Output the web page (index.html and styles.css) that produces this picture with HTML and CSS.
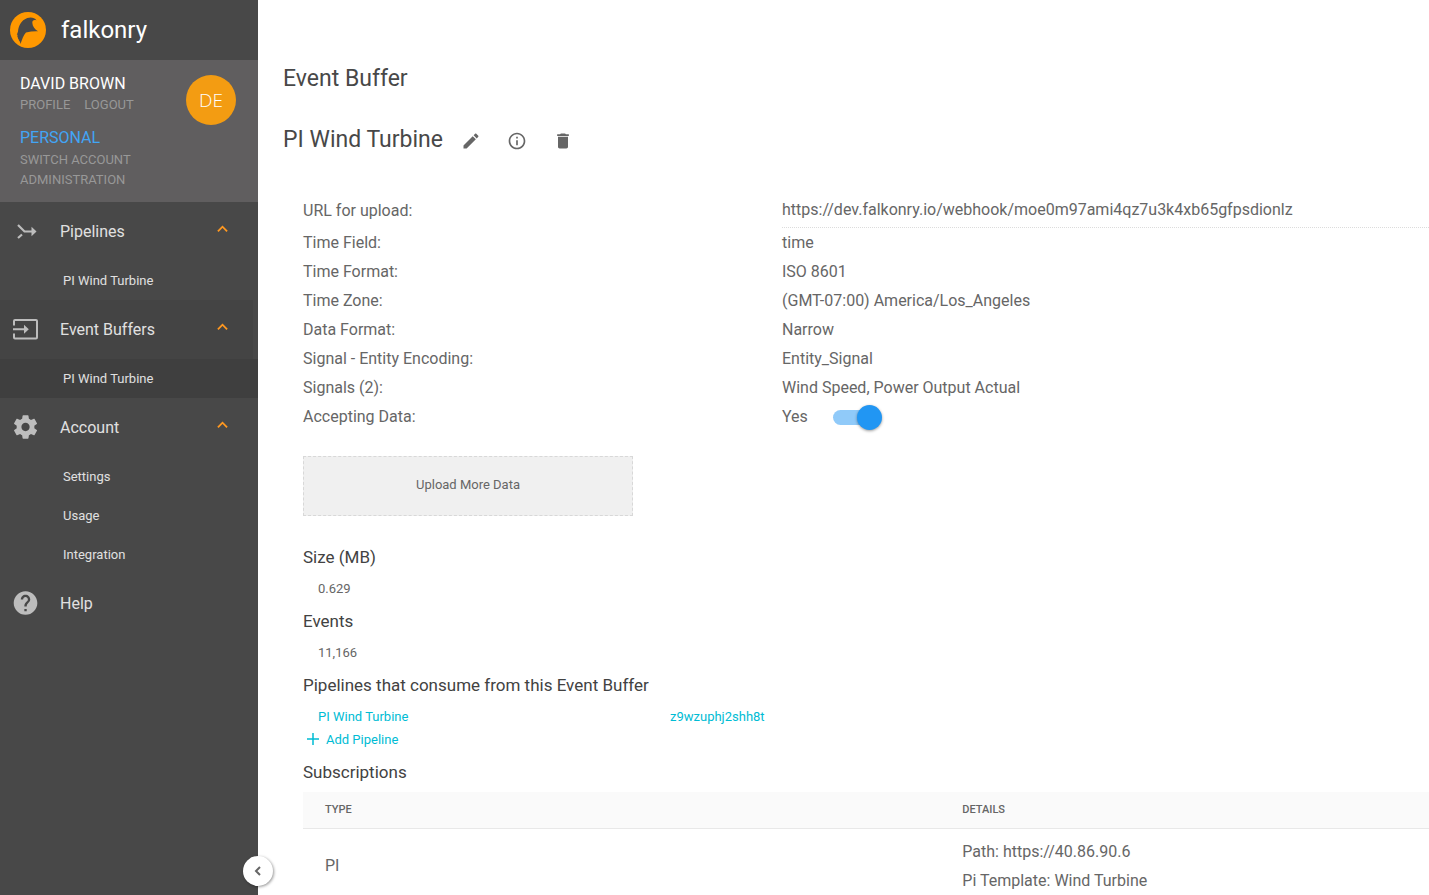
FILE: index.html
```html
<!DOCTYPE html>
<html lang="en">
<head>
<meta charset="utf-8">
<title>Event Buffer - falkonry</title>
<link rel="stylesheet" href="styles.css">
</head>
<body>
<div class="app">
  <aside class="sidebar">
    <div class="brand">
      <svg class="brand-logo" viewBox="0 0 36 36" aria-hidden="true"><circle cx="18" cy="18" r="18" fill="#ff9800"/><path fill="#484848" d="M8 19.500C8.500 14 11 9.500 14.500 7.500C18 5 24 4.500 26.500 8.500C24 7.500 22.300 8.500 22.300 10.800C22.500 14.500 25 17.500 28 19.200C24 19 20 19.500 16 20.500C13.500 23 12 27.500 10.500 32L9.700 28.500L9.200 30L8.700 26.500L8 28L8 24.500L7.200 26L7.600 22.500L6.800 23Z"/></svg>
      <span class="brand-name">falkonry</span>
    </div>
    <section class="user">
      <div class="user-info">
        <div class="user-name">DAVID BROWN</div>
        <div class="user-links"><a href="#profile">PROFILE</a><a href="#logout">LOGOUT</a></div>
        <div class="account-name">PERSONAL</div>
        <a class="user-link" href="#switch">SWITCH ACCOUNT</a>
        <a class="user-link" href="#admin">ADMINISTRATION</a>
      </div>
      <div class="avatar">DE</div>
    </section>
    <nav class="menu">
      <a class="menu-item" href="#pipelines">
        <svg class="menu-icon" viewBox="0 0 26 26" aria-hidden="true"><path d="M5 7L11.500 13.500H19M5 20L9 16.500" fill="none" stroke="#bdbdbd" stroke-width="2.200"/><path d="M18.500 8.800L23.500 13.500L18.500 18.300Z" fill="#bdbdbd"/></svg>
        <span class="menu-label">Pipelines</span>
        <svg class="chevron" viewBox="0 0 12 8" aria-hidden="true"><path d="M1 6.500L6 1.500L11 6.500"/></svg>
      </a>
      <a class="sub-item" href="#pipeline">PI Wind Turbine</a>
      <a class="menu-item menu-item-open" href="#buffers">
        <svg class="menu-icon" viewBox="0 0 26 26" aria-hidden="true"><path d="M1 9.500V5Q1 4 2 4H23Q24 4 24 5V21.500Q24 22.500 23 22.500H2Q1 22.500 1 21.500V17.500M0 13.300H12" fill="none" stroke="#bdbdbd" stroke-width="2"/><path d="M11 8.800L15.800 13.300L11 17.800Z" fill="#bdbdbd"/></svg>
        <span class="menu-label">Event Buffers</span>
        <svg class="chevron" viewBox="0 0 12 8" aria-hidden="true"><path d="M1 6.500L6 1.500L11 6.500"/></svg>
      </a>
      <a class="sub-item sub-item-active" href="#buffer">PI Wind Turbine</a>
      <a class="menu-item" href="#account">
        <svg class="menu-icon" viewBox="1.400 1 22 22" aria-hidden="true"><path fill="#bdbdbd" d="M19.430 12.980c.04-.32.07-.64.07-.98s-.03-.66-.07-.98l2.110-1.650c.19-.15.24-.42.12-.64l-2-3.460c-.12-.22-.39-.3-.61-.22l-2.490 1c-.52-.4-1.080-.73-1.690-.98l-.38-2.650C14.460 2.180 14.250 2 14 2h-4c-.25 0-.46.18-.49.42l-.38 2.650c-.61.25-1.170.59-1.690.98l-2.490-1c-.23-.09-.49 0-.61.22l-2 3.460c-.13.22-.07.49.12.64l2.110 1.650c-.04.32-.07.65-.07.98s.03.66.07.98l-2.110 1.650c-.19.15-.24.42-.12.64l2 3.460c.12.22.39.3.61.22l2.490-1c.52.4 1.080.73 1.690.98l.38 2.650c.03.24.24.42.49.42h4c.25 0 .46-.18.49-.42l.38-2.650c.61-.25 1.170-.59 1.690-.98l2.490 1c.23.09.49 0 .61-.22l2-3.460c.12-.22.07-.49-.12-.64l-2.110-1.650zM12 15.500c-1.930 0-3.500-1.570-3.500-3.500s1.570-3.500 3.500-3.500 3.500 1.570 3.500 3.500-1.570 3.500-3.500 3.500z"/></svg>
        <span class="menu-label">Account</span>
        <svg class="chevron" viewBox="0 0 12 8" aria-hidden="true"><path d="M1 6.500L6 1.500L11 6.500"/></svg>
      </a>
      <a class="sub-item" href="#settings">Settings</a>
      <a class="sub-item" href="#usage">Usage</a>
      <a class="sub-item" href="#integration">Integration</a>
      <a class="menu-item" href="#help">
        <svg class="menu-icon" viewBox="1.400 1 22 22" aria-hidden="true"><path fill="#bdbdbd" d="M12 2C6.480 2 2 6.480 2 12s4.480 10 10 10 10-4.480 10-10S17.520 2 12 2zm1 17h-2v-2h2v2zm2.070-7.750l-.9.92C13.450 12.900 13 13.500 13 15h-2v-.5c0-1.100.45-2.100 1.170-2.830l1.240-1.260c.37-.36.59-.86.59-1.410 0-1.100-.9-2-2-2s-2 .9-2 2H8c0-2.210 1.790-4 4-4s4 1.790 4 4c0 .88-.36 1.680-.93 2.250z"/></svg>
        <span class="menu-label">Help</span>
      </a>
    </nav>
    <button class="collapse" type="button" aria-label="Collapse menu"><svg viewBox="0 0 8 10" aria-hidden="true"><path d="M6 1L2 5L6 9"/></svg></button>
  </aside>

  <main class="content">
    <h1 class="page-title">Event Buffer</h1>
    <div class="title-row">
      <h2 class="page-title">PI Wind Turbine</h2>
      <div class="actions">
        <button class="icon-button" type="button" aria-label="Edit"><svg viewBox="0 0 24 24" aria-hidden="true"><path d="M3 17.250V21h3.750L17.810 9.940l-3.750-3.750L3 17.250zM20.710 7.040c.39-.39.39-1.020 0-1.410l-2.340-2.340c-.39-.39-1.020-.39-1.410 0l-1.830 1.830 3.750 3.750 1.830-1.830z"/></svg></button>
        <button class="icon-button" type="button" aria-label="Information"><svg viewBox="0 0 24 24" aria-hidden="true"><path d="M11 17h2v-6h-2v6zm1-15C6.480 2 2 6.480 2 12s4.480 10 10 10 10-4.480 10-10S17.520 2 12 2zm0 18c-4.410 0-8-3.590-8-8s3.590-8 8-8 8 3.590 8 8-3.590 8-8 8zM11 9h2V7h-2v2z"/></svg></button>
        <button class="icon-button" type="button" aria-label="Delete"><svg viewBox="0 0 24 24" aria-hidden="true"><path d="M6 19c0 1.100.9 2 2 2h8c1.100 0 2-.9 2-2V7H6v12zM19 4h-3.500l-1-1h-5l-1 1H5v2h14V4z"/></svg></button>
      </div>
    </div>

    <div class="details">
      <div class="field field-url"><label for="upload-url">URL for upload:</label><input id="upload-url" class="url-input" type="text" readonly value="https://dev.falkonry.io/webhook/moe0m97ami4qz7u3k4xb65gfpsdionlz"></div>
      <div class="field"><span>Time Field:</span><span>time</span></div>
      <div class="field"><span>Time Format:</span><span>ISO 8601</span></div>
      <div class="field"><span>Time Zone:</span><span>(GMT-07:00) America/Los_Angeles</span></div>
      <div class="field"><span>Data Format:</span><span>Narrow</span></div>
      <div class="field"><span>Signal - Entity Encoding:</span><span>Entity_Signal</span></div>
      <div class="field"><span>Signals (2):</span><span>Wind Speed, Power Output Actual</span></div>
      <div class="field"><label for="accepting">Accepting Data:</label><span class="accepting"><span>Yes</span><input id="accepting" class="switch" type="checkbox" role="switch" checked></span></div>

      <button class="upload" type="button">Upload More Data</button>

      <h3 class="section-title">Size (MB)</h3>
      <p class="section-value">0.629</p>
      <h3 class="section-title">Events</h3>
      <p class="section-value">11,166</p>
      <h3 class="section-title">Pipelines that consume from this Event Buffer</h3>
      <div class="pipeline-row"><a href="#pipeline">PI Wind Turbine</a><a href="#pipeline-id">z9wzuphj2shh8t</a></div>
      <button class="add-pipeline" type="button"><svg viewBox="0 0 12 12" aria-hidden="true"><path d="M6 0V12M0 6H12"/></svg>Add Pipeline</button>
      <h3 class="section-title">Subscriptions</h3>
      <table class="subscriptions">
        <thead><tr><th class="type-column">TYPE</th><th>DETAILS</th></tr></thead>
        <tbody><tr><td>PI</td><td>Path: https://40.86.90.6<br>Pi Template: Wind Turbine</td></tr></tbody>
      </table>
    </div>
  </main>
</div>
</body>
</html>
```
FILE: styles.css
```css
* {
  box-sizing: border-box;
}

body {
  margin: 0;
  font-family: Roboto, "Liberation Sans", sans-serif;
  font-size: 16px;
  color: #666;
  background: #fff;
}

a {
  color: inherit;
  text-decoration: none;
}

button,
input {
  font: inherit;
  color: inherit;
}

h1, h2, h3, p {
  margin: 0;
  font-weight: 400;
}

.app {
  display: flex;
  height: 100vh;
  overflow: hidden;
}

.sidebar {
  position: relative;
  flex: 0 0 258px;
  background: #484848;
  color: #e0e0e0;
}

.brand {
  display: flex;
  align-items: center;
  gap: 15px;
  height: 60px;
  padding-left: 10px;
}

.brand-logo {
  width: 36px;
  height: 36px;
}

.brand-name {
  font-size: 24px;
  color: #fff;
}

.user {
  display: flex;
  justify-content: space-between;
  height: 142px;
  padding: 13px 22px 0 20px;
  background: #605e5f;
  font-size: 13px;
  line-height: 20px;
  color: #989898;
}

.user-name {
  font-size: 16px;
  line-height: 22px;
  color: #fff;
}

.user-links {
  display: flex;
  gap: 14px;
}

.account-name {
  margin-top: 11px;
  font-size: 16px;
  line-height: 24px;
  color: #42a5f5;
}

.user-link {
  display: block;
}

.avatar {
  display: grid;
  place-items: center;
  width: 50px;
  height: 50px;
  margin-top: 2px;
  border-radius: 50%;
  background: #f39c12;
  font-family: "Open Sans", sans-serif;
  font-size: 19px;
  font-weight: 300;
  line-height: 48px;
  color: #fff;
}

.menu-item {
  display: flex;
  align-items: center;
  height: 59px;
  padding: 0 30px 0 13px;
  font-size: 16px;
}

.menu-item-open {
  margin-right: 5px;
  padding-right: 25px;
  background: #444;
}

.menu-icon {
  width: 26px;
  height: 26px;
  margin: 0 21px 1px 0;
}

.menu-label {
  flex: 1;
}

.chevron {
  width: 11px;
  height: 8px;
  margin-bottom: 6px;
  fill: none;
  stroke: #ff9820;
  stroke-width: 2;
}

.sub-item {
  display: block;
  padding-left: 63px;
  font-size: 13px;
  line-height: 39px;
}

.sub-item-active {
  background: #3f3f3f;
}

.collapse {
  position: absolute;
  right: -15px;
  bottom: 9px;
  display: grid;
  place-items: center;
  width: 30px;
  height: 30px;
  padding: 0;
  border: 0;
  border-radius: 50%;
  background: #fff;
  box-shadow: 1px 1px 3px rgba(0, 0, 0, 0.4);
}

.collapse svg {
  width: 8px;
  height: 10px;
  fill: none;
  stroke: #666;
  stroke-width: 2;
}

.content {
  flex: 1;
  min-width: 0;
  overflow: hidden;
  padding: 63px 0 0 25px;
}

.page-title {
  font-size: 23px;
  line-height: 32px;
  color: #484848;
}

.title-row {
  display: flex;
  align-items: center;
  gap: 18px;
  margin-top: 29px;
}

.actions {
  display: flex;
  gap: 26px;
  padding-top: 2px;
}

.icon-button {
  width: 20px;
  height: 20px;
  padding: 0;
  border: 0;
  background: none;
}

.icon-button svg {
  display: block;
  width: 20px;
  height: 20px;
  fill: #666;
}

.details {
  padding: 36px 0 0 20px;
}

.field {
  display: grid;
  grid-template-columns: 479fr 647fr;
  line-height: 29px;
}

.field-url {
  height: 36px;
  line-height: 38px;
}

.url-input {
  width: 100%;
  height: 36px;
  padding: 0;
  border: 0;
  border-bottom: 1px dotted #dcdcdc;
  background: none;
  outline: 0;
}

.accepting {
  display: flex;
  align-items: center;
  gap: 25px;
}

.switch {
  appearance: none;
  position: relative;
  width: 49px;
  height: 15px;
  margin: 2px 0 0;
  border-radius: 8px;
  background: linear-gradient(to right, #90caf9 40px, transparent 40px);
}

.switch::after {
  content: "";
  position: absolute;
  top: -5px;
  right: 0;
  width: 25px;
  height: 25px;
  border-radius: 50%;
  background: #2196f3;
  box-shadow: 0 1px 3px rgba(0, 0, 0, 0.4);
}

.upload {
  display: block;
  width: 330px;
  height: 60px;
  margin: 25px 0;
  padding: 0 0 3px;
  border: 1px dashed #d8d8d8;
  background: #f0f0f0;
  font-size: 13px;
}

.section-title {
  font-size: 17px;
  line-height: 32px;
  color: #424242;
}

.section-value {
  padding-left: 15px;
  font-size: 13px;
  line-height: 32px;
}

.pipeline-row {
  display: grid;
  grid-template-columns: 352px 1fr;
  padding-left: 15px;
  font-size: 13px;
  line-height: 31px;
  color: #00bcd4;
}

.add-pipeline {
  display: flex;
  align-items: center;
  gap: 7px;
  height: 15px;
  margin-bottom: 9px;
  padding: 0 0 0 4px;
  border: 0;
  background: none;
  font-size: 13px;
  color: #00bcd4;
}

.add-pipeline svg {
  width: 12px;
  height: 12px;
  margin-bottom: 1px;
  fill: none;
  stroke: #00bcd4;
  stroke-width: 1.500;
}

.subscriptions {
  width: 100%;
  margin-top: 4px;
  border-collapse: collapse;
  table-layout: fixed;
}

.subscriptions th {
  height: 36px;
  padding: 0 22px;
  border-bottom: 1px solid #e8e8e8;
  background: #fafafa;
  font-size: 11px;
  font-weight: 500;
  text-align: left;
}

.subscriptions .type-column {
  width: 56.6%;
}

.subscriptions td {
  padding: 8px 22px;
  line-height: 29px;
}
```
